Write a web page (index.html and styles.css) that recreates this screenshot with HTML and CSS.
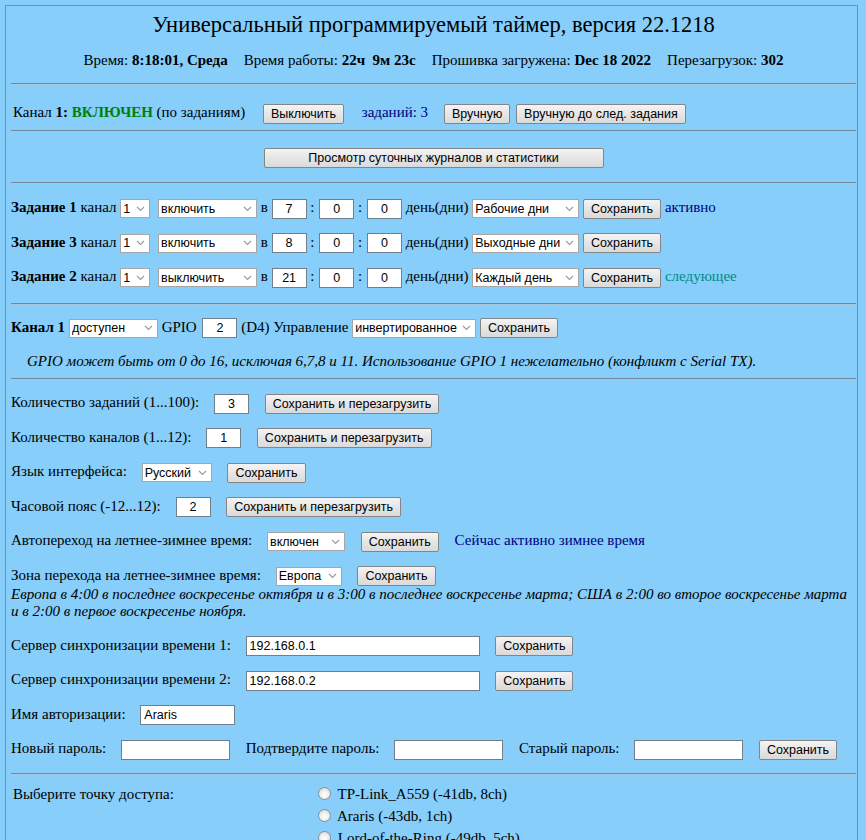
FILE: index.html
```html
<!DOCTYPE html>
<html lang="ru">
<head>
<meta charset="utf-8">
<title>Универсальный программируемый таймер</title>
<link rel="stylesheet" href="styles.css">
</head>
<body>
<div class="page">
  <section class="header">
    <h1 class="title">Универсальный программируемый таймер, версия 22.1218</h1>
    <div class="status">Время: <b>8:18:01, Среда</b><span class="sp"></span>Время работы: <b>22ч&nbsp; 9м 23с</b><span class="sp"></span>Прошивка загружена: <b>Dec 18 2022</b><span class="sp"></span>Перезагрузок: <b>302</b></div>
  </section>
  <hr class="rule">
  <section class="chan-state">
    <div class="line">
      <span class="lbl">Канал <b>1:</b> <b class="on">ВКЛЮЧЕН</b> (по заданиям)</span>
      <button class="btn gap19">Выключить</button>
      <span class="navy gap19">заданий: 3</span>
      <button class="btn gap18">Вручную</button>
      <button class="btn gap6">Вручную до след. задания</button>
    </div>
  </section>
  <hr class="rule">
  <section class="journal">
    <button class="btn wide">Просмотр суточных журналов и статистики</button>
  </section>
  <hr class="rule">
  <section class="tasks">
    <div class="row">
      <b>Задание 1</b> канал <select class="sel s-ch"><option>1</option></select>
      <select class="sel s-act gap8"><option>включить</option></select>
      в <input class="inp num" value="7"> : <input class="inp num tm" value="0"> : <input class="inp num tm" value="0">
      день(дни) <select class="sel s-day"><option>Рабочие дни</option></select>
      <button class="btn">Сохранить</button>
      <span class="navy">активно</span>
    </div>
    <div class="row">
      <b>Задание 3</b> канал <select class="sel s-ch"><option>1</option></select>
      <select class="sel s-act gap8"><option>включить</option></select>
      в <input class="inp num" value="8"> : <input class="inp num tm" value="0"> : <input class="inp num tm" value="0">
      день(дни) <select class="sel s-day"><option>Выходные дни</option></select>
      <button class="btn">Сохранить</button>
    </div>
    <div class="row">
      <b>Задание 2</b> канал <select class="sel s-ch"><option>1</option></select>
      <select class="sel s-act gap8"><option>выключить</option></select>
      в <input class="inp num" value="21"> : <input class="inp num tm" value="0"> : <input class="inp num tm" value="0">
      день(дни) <select class="sel s-day"><option>Каждый день</option></select>
      <button class="btn">Сохранить</button>
      <span class="teal">следующее</span>
    </div>
  </section>
  <hr class="rule">
  <section class="chan-cfg">
    <div class="row">
      <b>Канал 1</b> <select class="sel s-avail"><option>доступен</option></select>
      GPIO <input class="inp num gpio" value="2">
      (D4) Управление <select class="sel s-ctrl"><option>инвертированное</option></select>
      <button class="btn">Сохранить</button>
    </div>
    <p class="note indent">GPIO может быть от 0 до 16, исключая 6,7,8 и 11. Использование GPIO 1 нежелательно (конфликт с Serial TX).</p>
  </section>
  <hr class="rule">
  <section class="settings">
    <div class="row">
      <span class="lbl">Количество заданий (1...100):</span>
      <input class="inp num gap14" value="3">
      <button class="btn gap16">Сохранить и перезагрузить</button>
    </div>
    <div class="row">
      <span class="lbl">Количество каналов (1...12):</span>
      <input class="inp num gap14" value="1">
      <button class="btn gap16">Сохранить и перезагрузить</button>
    </div>
    <div class="row">
      <span class="lbl">Язык интерфейса:</span>
      <select class="sel s-lang gap14"><option>Русский</option></select>
      <button class="btn gap16">Сохранить</button>
    </div>
    <div class="row">
      <span class="lbl">Часовой пояс (-12...12):</span>
      <input class="inp num gap14" value="2">
      <button class="btn gap16">Сохранить и перезагрузить</button>
    </div>
    <div class="row">
      <span class="lbl">Автопереход на летнее-зимнее время:</span>
      <select class="sel s-dst gap14"><option>включен</option></select>
      <button class="btn gap16">Сохранить</button>
      <span class="navy gap16">Сейчас активно зимнее время</span>
    </div>
    <div class="zone">
      <div class="zone-line">
        <span class="lbl">Зона перехода на летнее-зимнее время:</span>
        <select class="sel s-zone gap14"><option>Европа</option></select>
        <button class="btn gap16">Сохранить</button>
      </div>
      <p class="note">Европа в 4:00 в последнее воскресенье октября и в 3:00 в последнее воскресенье марта; США в 2:00 во второе воскресенье марта и в 2:00 в первое воскресенье ноября.</p>
    </div>
    <div class="row">
      <span class="lbl">Сервер синхронизации времени 1:</span>
      <input class="inp server gap14" value="192.168.0.1">
      <button class="btn gap16">Сохранить</button>
    </div>
    <div class="row">
      <span class="lbl">Сервер синхронизации времени 2:</span>
      <input class="inp server gap14" value="192.168.0.2">
      <button class="btn gap16">Сохранить</button>
    </div>
    <div class="row">
      <span class="lbl">Имя авторизации:</span>
      <input class="inp login gap14" value="Araris">
    </div>
    <div class="row">
      <span class="lbl">Новый пароль:</span>
      <input class="inp pass gap14" type="password">
      <span class="lbl gap16">Подтвердите пароль:</span>
      <input class="inp pass gap14" type="password">
      <span class="lbl gap16">Старый пароль:</span>
      <input class="inp pass gap14" type="password">
      <button class="btn gap16">Сохранить</button>
    </div>
  </section>
  <hr class="rule">
  <section class="ap">
    <div class="ap-label">Выберите точку доступа:</div>
    <ul class="ap-list">
      <li><label><input type="radio" name="ap" class="radio"> TP-Link_A559 (-41db, 8ch)</label></li>
      <li><label><input type="radio" name="ap" class="radio"> Araris (-43db, 1ch)</label></li>
      <li><label><input type="radio" name="ap" class="radio"> Lord-of-the-Ring (-49db, 5ch)</label></li>
    </ul>
  </section>
</div>
</body>
</html>
```
FILE: styles.css
```css
html, body {
  margin: 0;
  padding: 0;
  overflow: hidden;
  background: #87cefa;
}
body {
  font-family: "Liberation Serif", "Times New Roman", serif;
  font-size: 15px;
  color: #000;
}
.page {
  margin: 5px 0 0 5px;
  width: 853px;
  border: 1px solid #7b8fa0;
  border-bottom: none;
  padding: 0 1px 0 5px;
  box-sizing: border-box;
  min-height: 900px;
}
b { font-weight: bold; }
.rule {
  margin: 0;
  height: 0;
  border: none;
  border-top: 1px solid #71889a;
  border-bottom: 1px solid #a9c8dc;
}
.header { padding-top: 5px; padding-bottom: 13px; text-align: center; }
.title {
  margin: 0;
  font-size: 22.5px;
  font-weight: normal;
  line-height: 28px;
}
.status { margin-top: 11px; line-height: 20px; }
.sp { display: inline-block; width: 16px; }

.chan-state { padding: 17px 0 8px 2px; }
.line { height: 20px; line-height: 20px; white-space: nowrap; }
.on { color: #008000; }
.navy { color: #000080; }
.teal { color: #008b8b; }

.journal { padding: 16px 0 14px; text-align: center; }
.btn {
  font-family: "Liberation Sans", Arial, sans-serif;
  font-size: 12.5px;
  height: 20px;
  line-height: 16px;
  padding: 0 7px;
  margin: 0;
  border: 1px solid #858585;
  border-radius: 2px;
  background: linear-gradient(#f4f4f4, #e6e6e6 50%, #dadada);
  color: #000;
  vertical-align: middle;
}
.wide { width: 340px; }

.tasks { padding: 6px 0 9px; }
.row {
  height: 34.5px;
  line-height: 34.5px;
  white-space: nowrap;
}
.sel {
  -webkit-appearance: none;
  appearance: none;
  font-family: "Liberation Sans", Arial, sans-serif;
  font-size: 12.5px;
  height: 19px;
  padding: 0 12px 0 2px;
  margin: 0;
  border: 1px solid #a6a6a6;
  border-radius: 0;
  background: #fff url("data:image/svg+xml,%3Csvg xmlns='http://www.w3.org/2000/svg' width='9' height='6'%3E%3Cpath d='M1 1l3.5 3.5L8 1' fill='none' stroke='%23999' stroke-width='1.1'/%3E%3C/svg%3E") no-repeat right 4px center;
  color: #000;
  vertical-align: middle;
}
.s-ch { width: 30px; }
.s-act { width: 99px; }
.s-day { width: 107px; }
.s-avail { width: 89px; }
.s-ctrl { width: 124px; }
.s-lang { width: 70px; }
.s-dst { width: 78px; }
.s-zone { width: 66px; }

.inp {
  font-family: "Liberation Sans", Arial, sans-serif;
  font-size: 12.5px;
  height: 20px;
  padding: 0 3px;
  margin: 0;
  border: 1px solid #6f7f8c;
  border-radius: 0;
  background: #fff;
  color: #000;
  box-sizing: border-box;
  vertical-align: middle;
}
.num { width: 35px; text-align: center; }
.server { width: 234px; }
.login { width: 95px; }
.pass { width: 109px; }

.chan-cfg { padding: 5px 0 8px; }
.note {
  margin: 0;
  font-style: italic;
  line-height: 18px;
}
.indent { padding-left: 16px; margin-top: 8px; }

.settings { padding: 5px 0 7px; }
.zone { padding: 7px 0 8px; }
.zone-line { height: 20px; line-height: 20px; white-space: nowrap; }
.zone .note { line-height: 17px; margin-top: 1px; }

.ap {
  display: grid;
  grid-template-columns: 305px 1fr;
  padding: 8px 0 0 2px;
}
.ap-label { line-height: 22px; }
.ap-list { margin: 0; padding: 0; list-style: none; }
.ap-list li { line-height: 22px; }
.radio {
  -webkit-appearance: none;
  appearance: none;
  width: 13px;
  height: 13px;
  margin: 0 3px 0 0;
  border: 1px solid #8e8f8f;
  border-radius: 50%;
  background: radial-gradient(circle at 50% 60%, #fff 0, #f1f1f1 40%, #cfcfcf 100%);
  vertical-align: -1px;
}

/* spacing helpers (after control rules so they win) */
.gap6 { margin-left: 2px; }
.gap8 { margin-left: 4px; }
.gap14 { margin-left: 11px; }
.gap16 { margin-left: 12px; }
.gap18 { margin-left: 12px; }
.gap19 { margin-left: 14px; }
.tm { margin-left: 1px; }
.gpio { margin-left: 2px; }
```
